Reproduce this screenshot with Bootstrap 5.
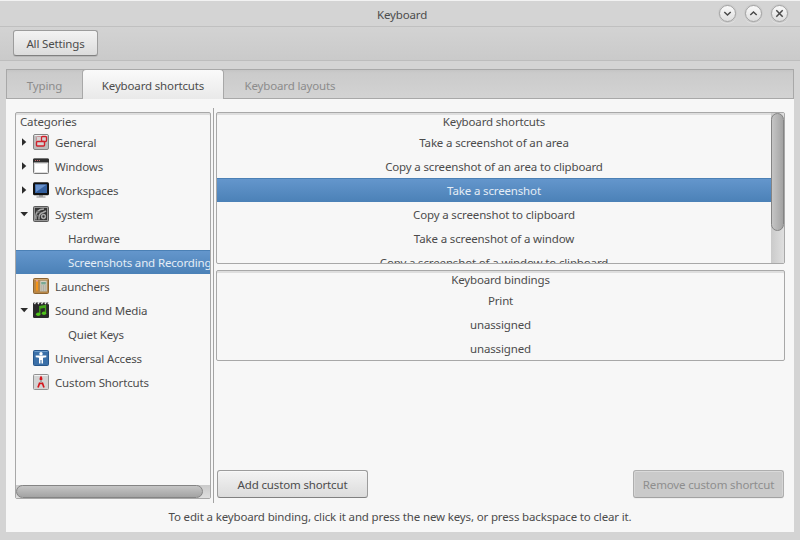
<!DOCTYPE html>
<html lang="en">
<head>
<meta charset="utf-8">
<meta name="viewport" content="width=device-width, initial-scale=1">
<title>Keyboard</title>
<link href="https://cdn.jsdelivr.net/npm/bootstrap@5.3.0/dist/css/bootstrap.min.css" rel="stylesheet">
<style>
  body { width: 800px; height: 540px; overflow: hidden; background: #d4d4d4; color: #4c4c4c;
    font-family: "Noto Sans", "Open Sans", sans-serif; font-size: 11.5px; letter-spacing: -.15px; line-height: 16px; }
  .titlebar { height: 26px; border-top: 1px solid #f2f2f2; padding-top: 3px; }
  .title-side { width: 85px; }
  .title-side.end { padding-right: 12px; gap: 9px; }
  .title-text { padding: 3px 0 0 4px; }
  .win-btn { width: 17px; height: 17px; border-radius: 50%; border: 1px solid #a2a2a2; padding: 0; margin-top: 1px;
    background: linear-gradient(#fafafa, #dedede); box-shadow: 0 0 0 1px #cacaca, 0 1px 0 1px #e0e0e0; display: flex; }
  .win-btn svg { width: 15px; height: 15px; }
  .toolbar-strip { height: 35px; border-top: 1px solid #c0c0c0; border-bottom: 1px solid #bdbdbd;
    background: linear-gradient(#d3d3d3, #cacaca); padding: 3px 13px; }
  .btn.gtk { --bs-btn-font-size: 11.5px; --bs-btn-line-height: 16px; --bs-btn-color: #4c4c4c; --bs-btn-border-radius: 3px;
    --bs-btn-padding-y: 0; --bs-btn-padding-x: 0; padding-top: 2px; letter-spacing: inherit; background: linear-gradient(#f3f3f3, #dcdcdc);
    border: 1px solid #9c9c9c; border-bottom-color: #808080; box-shadow: inset 0 1px 0 #f8f8f8; }
  .btn.gtk:disabled { opacity: 1; color: #8e8e8e; background: #cacaca; border-color: #aeaeae; border-bottom-color: #a2a2a2;
    box-shadow: inset 0 1px 0 #dadada, inset 1px 0 0 #d6d6d6, inset -1px 0 0 #d6d6d6, 0 1px 0 #eee; }
  .btn.gtk.btn-all { width: 85px; height: 26px; box-shadow: 0 1px 0 #b8b8b8; }
  .btn-wide { width: 151px; height: 28px; }
  .notebook { margin: 8px 6px 8px; height: 463px; background: #f7f7f7; }
  .nav-tabs.tabs { height: 30px; border: 1px solid #a8a8a8; background: linear-gradient(#c4c4c4, #cbcbcb 3px, #d3d3d3); flex-wrap: nowrap; }
  .tabs .nav-link { height: 28px; margin: 0; border: 0; border-radius: 0; color: #8c8c8c; padding: 8px 0 0; background: none; }
  .tabs .nav-link.active { position: relative; z-index: 1; height: 30px; margin-top: -1px; width: 142px; padding-top: 8px;
    color: #4c4c4c; background: linear-gradient(#fafafa, #e9e9e9); border: 1px solid #a8a8a8; border-bottom: 0; border-radius: 4px 4px 0 0; }
  .tabs .tab-a { width: 75px; }
  .tabs .tab-c { width: 132px; }
  .page-body { padding: 9px 9px 0; }
  .pane { border: 1px solid #a8a8a8; border-radius: 2px; background: #f7f7f7; overflow: hidden; box-shadow: inset 0 2px 0 #dedede; }
  .pane-left { width: 196px; height: 387px; margin: 4px 0 0; }
  .left-rows { height: 372px; }
  .divider { width: 1px; height: 395px; background: #a3a3a3; margin: 0 2px; }
  .right-col { width: 569px; }
  .pane-top { height: 152px; margin-top: 4px; }
  .pane-bottom { height: 91px; margin-top: 6px; }
  .head { height: 17px; line-height: 17px; }
  .head-left { padding-left: 4px; }
  .list-group.rows { --bs-list-group-border-radius: 0; }
  .rows .list-group-item { height: 24px; flex: none; border: 0; padding: 1px 0 0; color: #4c4c4c; background: transparent;
    line-height: 24px; white-space: nowrap; overflow: hidden; margin: 0; }
  .rows .list-group-item.sub { padding-left: 52px; }
  .rows .list-group-item + .list-group-item.active { margin-top: 0; color: #e4edf6; background: linear-gradient(#6597cd, #4b81b7); box-shadow: inset 0 1px 0 #4b80b5; }
  .cat { display: flex; align-items: flex-start; }
  .cat .arrow { width: 17px; height: 16px; flex: none; margin-top: 3px; }
  .cat .glyph { width: 16px; height: 16px; flex: none; margin: 3px 6px 0 0; }
  .trough-h { height: 13px; background: linear-gradient(#cacaca, #dfdfdf); }
  .thumb-h { width: 187px; height: 13px; border: 1px solid #848484; border-radius: 7px; background: linear-gradient(#c5c5c5, #a3a3a3); }
  .trough-v { width: 13px; background: linear-gradient(90deg, #cacaca, #dfdfdf); }
  .thumb-v { width: 13px; height: 118px; border: 1px solid #848484; border-radius: 7px; background: linear-gradient(90deg, #c5c5c5, #a3a3a3); }
  .actions { margin-top: auto; padding: 0 1px 5px; }
  .hint { margin-top: 6px; }
</style>
<script src="https://cdn.jsdelivr.net/npm/bootstrap@5.3.0/dist/js/bootstrap.bundle.min.js"></script>
</head>
<body>
<header class="titlebar d-flex justify-content-between">
  <div class="title-side"></div>
  <div class="title-text">Keyboard</div>
  <div class="title-side end d-flex justify-content-end">
    <button class="win-btn" aria-label="Minimize"><svg viewBox="0 0 15 15" fill="none" stroke="#4a4a4a" stroke-width="1.5"><path d="M4.3 6l3.2 3 3.2-3"/></svg></button>
    <button class="win-btn" aria-label="Maximize"><svg viewBox="0 0 15 15" fill="none" stroke="#4a4a4a" stroke-width="1.5"><path d="M4.3 9l3.2-3 3.2 3"/></svg></button>
    <button class="win-btn" aria-label="Close"><svg viewBox="0 0 15 15" fill="none" stroke="#4a4a4a" stroke-width="1.5"><path d="M4.3 4.3l6.4 6.4M10.7 4.3l-6.4 6.4"/></svg></button>
  </div>
</header>
<div class="toolbar-strip"><button class="btn gtk btn-all d-block">All Settings</button></div>
<main class="notebook">
  <ul class="nav nav-tabs tabs text-center">
    <li class="nav-item"><a class="nav-link tab-a">Typing</a></li>
    <li class="nav-item"><a class="nav-link active">Keyboard shortcuts</a></li>
    <li class="nav-item"><a class="nav-link tab-c">Keyboard layouts</a></li>
  </ul>
  <div class="d-flex page-body">
    <section class="pane pane-left">
      <div class="left-rows">
        <div class="head head-left">Categories</div>
        <div class="list-group rows">
          <div class="list-group-item cat"><svg class="arrow" viewBox="0 0 17 16"><path d="M6 4.2v7.6L10.3 8z" fill="#2c2c2c"/></svg>
            <svg class="glyph" viewBox="0 0 16 16"><rect x=".5" y=".5" width="15" height="15" rx="1.5" fill="#bcbcbc" stroke="#858585"/><path d="M1.5 1.5h13" stroke="#eee"/><g fill="#d4d4d4"><rect x="3.5" y="2.5" width="5" height="5" rx="1" stroke="#c99096"/><rect x="8.5" y="2.5" width="5" height="5" rx="1" stroke="#d0202b" stroke-width="1.3"/><rect x="3.5" y="7.5" width="8" height="4.5" rx="1" stroke="#d0202b" stroke-width="1.4"/></g></svg>General</div>
          <div class="list-group-item cat"><svg class="arrow" viewBox="0 0 17 16"><path d="M6 4.2v7.6L10.3 8z" fill="#2c2c2c"/></svg>
            <svg class="glyph" viewBox="0 0 16 16"><rect x=".5" y="1" width="15" height="14.5" rx="1" fill="#fff" stroke="#777"/><path d="M0 4.5V1.5Q0 .5 1 .5h14q1 0 1 1v3z" fill="#303030"/><path d="M2 2.5h1M4 2.5h1M6 2.5h1" stroke="#b66"/><path d="M1.5 5.5h13v9h-13z" fill="#fff" stroke="#ddd"/></svg>Windows</div>
          <div class="list-group-item cat"><svg class="arrow" viewBox="0 0 17 16"><path d="M6 4.2v7.6L10.3 8z" fill="#2c2c2c"/></svg>
            <svg class="glyph" viewBox="0 0 16 16"><rect width="16" height="13" y=".3" rx="1.5" fill="#111"/><path d="M2 2.3h12v8.6H2z" fill="#34609f"/><path d="M2.5 2.8h11L3 10z" fill="#6790cb"/><path d="M6 13.3h4v1.2H6z" fill="#777"/><path d="M3.5 15h9" stroke="#888"/></svg>Workspaces</div>
          <div class="list-group-item cat"><svg class="arrow" viewBox="0 0 17 16"><path d="M4.4 6h7.6L8.2 10.2z" fill="#2c2c2c"/></svg>
            <svg class="glyph" viewBox="0 0 16 16"><rect x=".5" y=".5" width="15" height="15" rx="1" fill="#969696" stroke="#5a5a5a"/><rect x="2" y="2" width="12" height="12" fill="#353535"/><g fill="none" stroke="#a8a8a8" stroke-width="1.5"><path d="M3 13.5C2.3 9 4 5 7.5 3.500L11 3"/><path d="M6 13.500C5.500 9 7 7 10 6.500l3-1.500"/><circle cx="10.500" cy="10.500" r="1.900"/><path d="M3.500 5l3 1.500M3 9l2.500 1" stroke="#777"/></g></svg>System</div>
          <div class="list-group-item sub">Hardware</div>
          <div class="list-group-item sub active">Screenshots and Recording</div>
          <div class="list-group-item cat"><svg class="arrow" viewBox="0 0 17 16"></svg>
            <svg class="glyph" viewBox="0 0 16 16"><rect x=".5" y=".5" width="15" height="15" rx="1" fill="#b98747" stroke="#8c6431"/><path d="M1.5 1.5h13" stroke="#d5ac75"/><path d="M3 2.5h2v9l-1 2.500-1-2.500z" fill="#f59417"/><path d="M3 2h2v1.500H3z" fill="#d99"/><rect x="7" y="2.600" width="7" height="11" rx=".6" fill="#d8d3c4" stroke="#a08f70" stroke-width=".6"/><path d="M8.200 4h4.600v2.400H8.200z" fill="#79a894"/><path d="M8.200 8h4.600M8.200 10h4.600M8.200 12h4.600" stroke="#8a8c87" stroke-dasharray="1.200 .5"/></svg>Launchers</div>
          <div class="list-group-item cat"><svg class="arrow" viewBox="0 0 17 16"><path d="M4.4 6h7.6L8.2 10.2z" fill="#2c2c2c"/></svg>
            <svg class="glyph" viewBox="0 0 16 16"><rect y=".5" width="16" height="15.5" rx="1.3" fill="#292929"/><path d="M1.500 2.200l1.200-2M5 2.200l1.200-2M8.500 2.200l1.200-2M12 2.200l1.200-2M15 2.200l.8-1.600" stroke="#eee" stroke-width="1.300"/><path d="M6.800 12V4.500L12.500 3.500v8M6.800 6l5.700-1" fill="none" stroke="#43a31b" stroke-width="1.300"/><ellipse cx="5.200" cy="12.300" rx="2.200" ry="1.700" fill="#4fc41b"/><ellipse cx="11" cy="11.300" rx="2.200" ry="1.700" fill="#4fc41b"/></svg>Sound and Media</div>
          <div class="list-group-item sub">Quiet Keys</div>
          <div class="list-group-item cat"><svg class="arrow" viewBox="0 0 17 16"></svg>
            <svg class="glyph" viewBox="0 0 16 16"><rect x=".5" y=".5" width="15" height="15" rx="1" fill="#3b70a8" stroke="#28578b"/><path d="M1.5 1.5h13" stroke="#6e9dcb"/><circle cx="8" cy="3.7" r="1.7" fill="#fff"/><path d="M2.7 5.5h10.6v1.7L10 7.8v5.7H8.5V10h-1v3.500H6V7.800l-3.300-.6z" fill="#fff"/></svg>Universal Access</div>
          <div class="list-group-item cat"><svg class="arrow" viewBox="0 0 17 16"></svg>
            <svg class="glyph" viewBox="0 0 16 16"><rect x=".5" y=".5" width="15" height="15" rx="1" fill="#d3d3d3" stroke="#929292"/><path d="M1.5 1.5h13" stroke="#f3f3f3"/><path d="M8 1.500q1.700 2 1.300 4.500H6.700Q6.300 3.500 8 1.500z" fill="#d4151c"/><path d="M7.200 6h1.600v2.500H7.200z" fill="#999"/><path d="M6.800 8.500L5 13.500M9.200 8.500l1.800 5M6.500 9.500h3" stroke="#d4151c" stroke-width="1.700"/></svg>Custom Shortcuts</div>
        </div>
      </div>
      <div class="trough-h"><div class="thumb-h"></div></div>
    </section>
    <div class="divider"></div>
    <section class="right-col d-flex flex-column">
      <div class="pane pane-top d-flex">
        <div class="flex-grow-1 text-center">
          <div class="head">Keyboard shortcuts</div>
          <div class="list-group rows">
            <div class="list-group-item">Take a screenshot of an area</div>
            <div class="list-group-item">Copy a screenshot of an area to clipboard</div>
            <div class="list-group-item active">Take a screenshot</div>
            <div class="list-group-item">Copy a screenshot to clipboard</div>
            <div class="list-group-item">Take a screenshot of a window</div>
            <div class="list-group-item">Copy a screenshot of a window to clipboard</div>
          </div>
        </div>
        <div class="trough-v"><div class="thumb-v"></div></div>
      </div>
      <div class="pane pane-bottom text-center">
        <div class="head">Keyboard bindings</div>
        <div class="list-group rows">
          <div class="list-group-item">Print</div>
          <div class="list-group-item">unassigned</div>
          <div class="list-group-item">unassigned</div>
        </div>
      </div>
      <div class="d-flex justify-content-between actions">
        <button class="btn gtk btn-wide">Add custom shortcut</button>
        <button class="btn gtk btn-wide" disabled>Remove custom shortcut</button>
      </div>
    </section>
  </div>
  <div class="text-center hint">To edit a keyboard binding, click it and press the new keys, or press backspace to clear it.</div>
</main>
</body>
</html>
